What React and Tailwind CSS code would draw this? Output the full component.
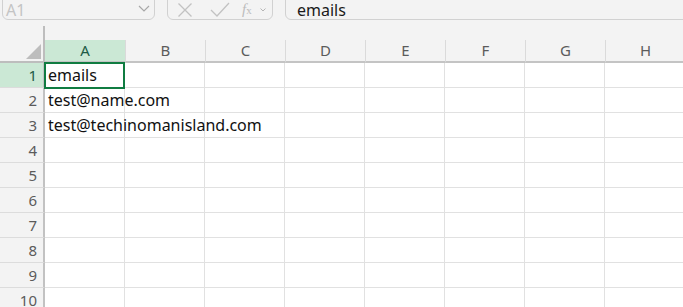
import React from "react";

const cols = ["A", "B", "C", "D", "E", "F", "G", "H"];
const data = {
  1: "emails",
  2: "test@name.com",
  3: "test@techinomanisland.com",
};

export default function App() {
  const rows = [1, 2, 3, 4, 5, 6, 7, 8, 9, 10];
  return (
    <div
      className="w-[683px] h-[307px] overflow-hidden bg-[#f3f3f3] text-[#242424]"
      style={{ fontFamily: '"Noto Sans", "Open Sans", sans-serif' }}
    >
      {/* formula bar */}
      <div className="flex items-end h-[20px] overflow-hidden">
        <div className="ml-[2px] w-[153px] h-[30px] shrink-0 border border-[#d1d1d1] rounded-[6px] flex items-center justify-between pl-[3px] pr-[3px] pt-[9px]">
          <span className="text-[16px] text-[#c4c4c4] leading-none">A1</span>
          <svg width="12" height="8" viewBox="0 0 12 8" className="mr-[1px] mt-[-1px]">
            <polyline points="1,1 6,6 11,1" fill="none" stroke="#a8a8a8" strokeWidth="1.2" />
          </svg>
        </div>
        <div className="ml-[12px] w-[106px] h-[30px] shrink-0 border border-[#d1d1d1] rounded-[6px] flex items-center pt-[9px]">
          <svg width="16" height="16" viewBox="0 0 16 16" className="ml-[9px]">
            <path d="M1.5 1.5 L14.5 14.5 M14.5 1.5 L1.5 14.5" stroke="#c2c2c2" strokeWidth="1.3" fill="none" />
          </svg>
          <svg width="20" height="16" viewBox="0 0 20 16" className="ml-[17px]">
            <polyline points="1,8 7,14 19,1" stroke="#c2c2c2" strokeWidth="1.3" fill="none" />
          </svg>
          <span
            className="ml-[12px] text-[15px] italic text-[#bcbcbc] leading-none"
            style={{ fontFamily: '"Liberation Serif", serif' }}
          >
            f<span className="text-[11px] not-italic">x</span>
          </span>
          <svg width="6" height="4" viewBox="0 0 6 4" className="ml-[8px]">
            <polyline points="0.5,0.5 3,3 5.5,0.5" fill="none" stroke="#b5b5b5" strokeWidth="1" />
          </svg>
        </div>
        <div className="ml-[12px] flex-1 h-[30px] mr-[-10px] border border-[#d1d1d1] rounded-[6px] flex items-center pl-[11px] pt-[9px]">
          <span className="text-[16px] leading-none text-[#1a1a1a]">emails</span>
        </div>
      </div>

      {/* column headers */}
      <div className="flex items-end mt-[6px] h-[37px]">
        <div className="relative w-[45px] h-[37px] shrink-0 border-r-2 border-b-2 border-[#bdbdbd]">
          <div
            className="absolute right-[2px] bottom-[2px] w-[15px] h-[15px] bg-[#bdbdbd]"
            style={{ clipPath: "polygon(100% 0, 100% 100%, 0 100%)" }}
          />
        </div>
        {cols.map((c, i) => (
          <div
            key={c}
            className={`w-[80px] h-[23px] shrink-0 flex items-center justify-center text-[15px] border-b-2 ${
              i === 0
                ? "bg-[#cbe8d5] text-[#1d5b46] border-[#c4c4c4]"
                : "border-l border-l-[#dadada] border-b-[#c4c4c4] text-[#5b5b5b]"
            }`}
          >
            {c}
          </div>
        ))}
      </div>

      {/* rows */}
      {rows.map((r) => (
        <div key={r} className="flex h-[25px]">
          <div
            className={`w-[45px] shrink-0 border-r-2 border-b border-r-[#c2c2c2] border-b-[#dcdcdc] flex items-center justify-end pr-[6px] text-[15px] ${
              r === 1 ? "bg-[#cbe8d5] text-[#1d5b46]" : "bg-[#f3f3f3] text-[#5b5b5b]"
            }`}
          >
            {r}
          </div>
          {cols.map((c, i) => (
            <div
              key={c}
              className="relative w-[80px] shrink-0 bg-white border-r border-b border-[#e1e1e1] flex items-center"
            >
              {i === 0 && data[r] && (
                <span className="pl-[3px] text-[16px] whitespace-nowrap text-[#111] relative z-10">
                  {data[r]}
                </span>
              )}
              {i === 0 && r === 1 && (
                <div className="absolute left-[-1px] top-[-1px] w-[81px] h-[27px] border-2 border-[#107c41] z-20" />
              )}
            </div>
          ))}
        </div>
      ))}
    </div>
  );
}
